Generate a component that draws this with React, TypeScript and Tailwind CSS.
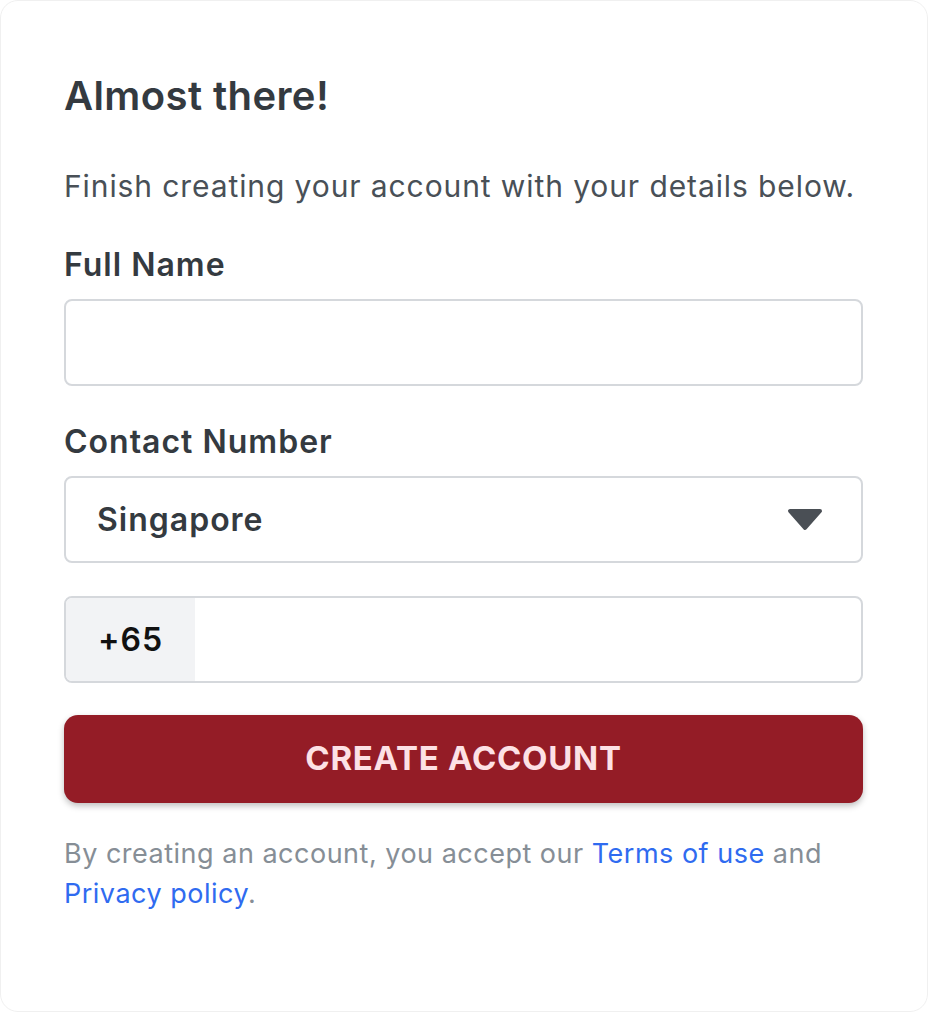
export default function App() {
  return (
    <div className="min-h-[1012px] bg-white font-['Inter','Noto_Sans',sans-serif]">
      <div className="h-[1012px] rounded-[18px] border border-[#f0f0f0] px-[63px] pt-[71px]">
        <h1 className="text-[40px] leading-[48px] font-semibold tracking-[0.4px] text-[#343a40]">Almost there!</h1>
        <p className="mt-[48px] text-[30px] leading-[36px] tracking-[0.9px] text-[#495057]">
          Finish creating your account with your details below.
        </p>

        <form className="mt-[42px] w-[799px]">
          <label className="block text-[32px] leading-[38px] font-semibold tracking-[1px] text-[#343a40]">
            Full Name
          </label>
          <input
            type="text"
            className="mt-[15px] block h-[87px] w-full rounded-[8px] border-2 border-[#d5d8dc] bg-white px-[32px] text-[28px] outline-none"
          />

          <label className="mt-[37px] block text-[32px] leading-[38px] font-semibold tracking-[1px] text-[#343a40]">
            Contact Number
          </label>
          <div className="mt-[15px] flex h-[87px] items-center justify-between rounded-[8px] border-2 border-[#d5d8dc] pl-[31px] pr-[38px]">
            <span className="text-[32px] font-semibold tracking-[1px] text-[#343a40]">Singapore</span>
            <svg width="36" height="23" viewBox="0 0 36 23">
              <polygon
                points="3,3 33,3 18,20"
                fill="#4a4f55"
                stroke="#4a4f55"
                strokeWidth="4"
                strokeLinejoin="round"
              />
            </svg>
          </div>

          <div className="mt-[33px] flex h-[87px] overflow-hidden rounded-[8px] border-2 border-[#d5d8dc]">
            <div className="flex w-[129px] items-center bg-[#f2f3f5] pl-[32px] text-[32px] font-semibold tracking-[1px] text-[#111]">
              +65
            </div>
            <input type="tel" className="flex-1 px-[20px] text-[28px] outline-none" />
          </div>

          <button
            type="submit"
            className="mt-[32px] flex h-[88px] w-full items-center justify-center rounded-[14px] bg-[#941c26] text-[33px] font-bold tracking-[0.7px] text-[#fde1e5] shadow-[0_3px_6px_rgba(0,0,0,0.25)]"
          >
            CREATE ACCOUNT
          </button>
        </form>

        <p className="mt-[31px] text-[27px] leading-[40px] tracking-[0.5px] text-[#868e96]">
          By creating an account, you accept our <a className="text-[#2f6bf0]">Terms of use</a> and{" "}
          <a className="text-[#2f6bf0]">Privacy policy</a>.
        </p>
      </div>
    </div>
  );
}
